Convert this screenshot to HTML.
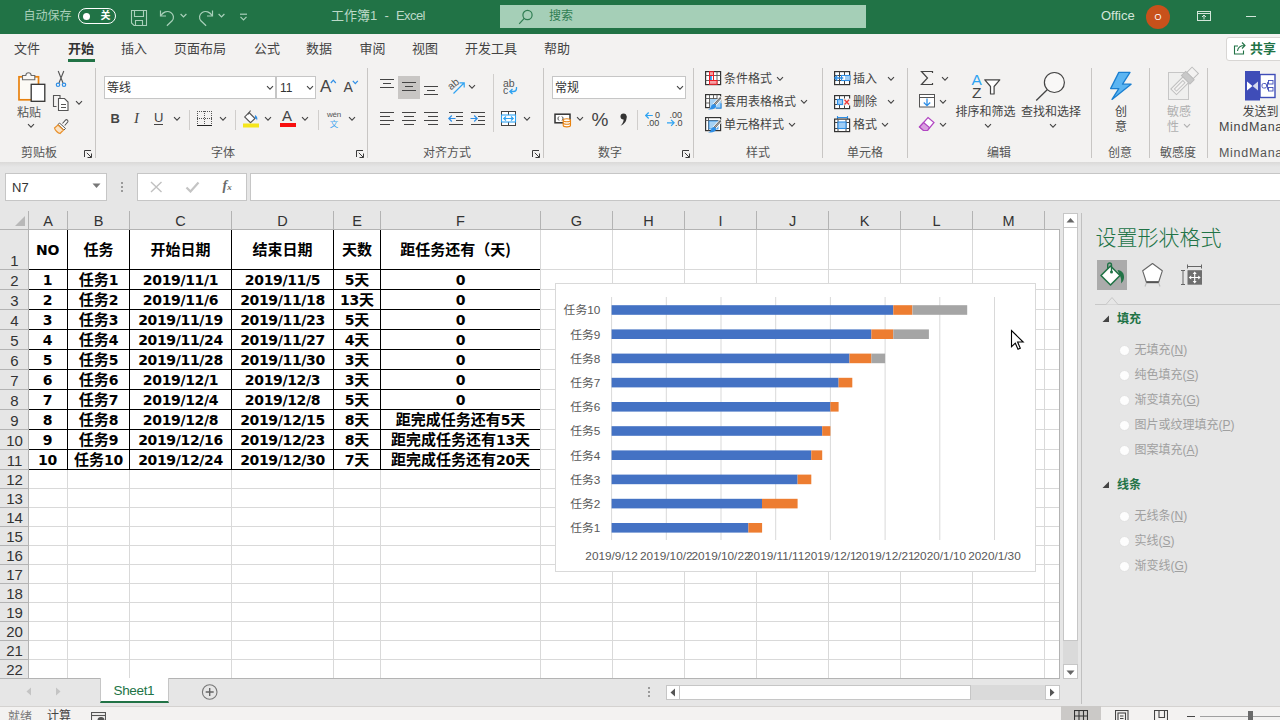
<!DOCTYPE html>
<html lang="zh-CN">
<head>
<meta charset="utf-8">
<title>工作簿1 - Excel</title>
<style>
html,body{margin:0;padding:0;}
body{width:1280px;height:720px;overflow:hidden;background:#e6e6e6;font-family:"Liberation Sans","Noto Sans CJK SC",sans-serif;font-size:12px;color:#444;}
#app{position:relative;width:1280px;height:720px;overflow:hidden;}
#app div,#app span,#app svg{position:absolute;box-sizing:border-box;}
.t{white-space:nowrap;line-height:1;}
/* title bar */
#titlebar{left:0;top:0;width:1280px;height:34px;background:#217346;}
#tabs{left:0;top:34px;width:1280px;height:28px;background:#f3f2f1;}
#ribbon{left:0;top:62px;width:1280px;height:100px;background:#f3f2f1;}
#ribshadow{left:0;top:162px;width:1280px;height:5px;background:linear-gradient(#dad9d8,#e6e6e6);}
.tab{top:41.6px;font-size:13px;color:#444;white-space:nowrap;line-height:14px;}
.gl{top:145px;font-size:12px;color:#555;white-space:nowrap;line-height:13px;text-align:center;}
.gsep{top:70px;width:1px;height:86px;background:#c8c6c4;}
.rt{font-size:12px;color:#444;white-space:nowrap;line-height:13px;}
/* sheet */
#sheet{left:0;top:0;width:1280px;height:720px;}
#gridbg{left:28px;top:230px;width:1031px;height:449px;background:#fff;}
.ch{top:212px;height:17px;text-align:center;font-size:14.5px;line-height:19px;color:#333;}
.chs{top:211px;width:1px;height:19px;background:#b3b3b3;}
.rh{left:0;width:28px;}
.rh span{left:2.5px;width:24px;bottom:-1px;text-align:center;font-size:15px;line-height:18px;color:#333;display:block;}
.rhs{left:0;width:28px;height:1px;background:#b3b3b3;}
.gv{top:230px;width:1px;height:449px;background:#d9d9d9;}
.gh{left:29px;width:1030px;height:1px;background:#d9d9d9;}
.tc{border:1px solid #000;background:#fff;text-align:center;font-weight:bold;color:#000;font-size:15px;}
.tc span{left:0;right:0;top:50%;line-height:20px;margin-top:-11px;white-space:nowrap;display:block;font-family:"Noto Sans CJK SC",sans-serif;}
.tc b{position:static;font-family:"DejaVu Sans",sans-serif;font-size:14px;letter-spacing:-0.35px;font-weight:bold;}
.tc.hd{border-top:0;}
.tc.c0{border-left:0;}
.tc.c5{border-right:0;}
#rhline{left:28px;top:211px;width:1px;height:468px;background:#b3b3b3;}
#chline{left:0;top:229px;width:1059px;height:1px;background:#b3b3b3;}
.chart{overflow:visible;}
.cl{font-size:11.8px;fill:#595959;font-family:"Liberation Sans","Noto Sans CJK SC",sans-serif;}
.rad{width:11px;height:11px;border-radius:50%;background:#fdfdfd;border:1px solid #e2e2e2;}
.ro{font-size:12px;line-height:14px;color:#a0a0a0;}
.tc i{position:relative;left:-5px;font-style:normal;}
.tc.hd span{margin-top:-10.3px;}

</style>
</head>
<body>
<div id="app">
<div id="titlebar">
<span class="t" style="left:23.500px;top:10px;font-size:12px;color:#a9d0ba">自动保存</span>
<div style="left:78px;top:8px;width:38px;height:16px;border:1px solid #fff;border-radius:8px"></div>
<div style="left:82.5px;top:12.5px;width:7px;height:7px;border-radius:50%;background:#fff"></div>
<span class="t" style="left:100.5px;top:11px;font-size:10px;color:#fff;font-weight:bold">关</span>
<svg style="left:130px;top:9px" width="18" height="18" viewBox="0 0 18 18" fill="none" stroke="#a9d0ba" stroke-width="1.1"><path d="M1.5 1.5h15v15h-12.5l-2.5-2.5z"/><path d="M4.5 1.5v6h9v-6"/><path d="M5.500 16.500v-5h7v5"/></svg>
<svg style="left:158px;top:8px" width="20" height="19" viewBox="0 0 20 19" fill="none" stroke="#a9d0ba" stroke-width="1.2"><path d="M2.500 2.500v5.500h5.500"/><path d="M2.800 7.800c2-3.600 6.500-5.600 10-3.300c3 2 3.500 5.600 1.300 8.300l-5.200 5"/></svg>
<svg style="left:180px;top:13px" width="7" height="6" viewBox="0 0 7 6" fill="none" stroke="#a9d0ba" stroke-width="1.2"><path d="M0.600 1l2.900 3l2.900-3"/></svg>
<svg style="left:196px;top:8px" width="20" height="19" viewBox="0 0 20 19" fill="none" stroke="#a9d0ba" stroke-width="1.2"><path d="M16.500 2.500v5.500h-5.500"/><path d="M16.200 7.800c-2-3.600-6.500-5.600-10-3.300c-3 2-3.500 5.600-1.300 8.300l5.200 5"/></svg>
<svg style="left:218px;top:13px" width="7" height="6" viewBox="0 0 7 6" fill="none" stroke="#a9d0ba" stroke-width="1.2"><path d="M0.600 1l2.900 3l2.900-3"/></svg>
<svg style="left:239px;top:13px" width="9" height="8" viewBox="0 0 9 8" fill="none" stroke="#a9d0ba" stroke-width="1.2"><path d="M1 1.200h7"/><path d="M1.500 3.800l3 3l3-3"/></svg>
<span class="t" style="left:331px;top:8px;font-size:13px;line-height:15px;color:#bcd9c8;white-space:pre">工作簿1  -  <span style="position:static;letter-spacing:-0.600px">Excel</span></span>
<div style="left:500px;top:5px;width:366px;height:23px;background:#a5cfb7"></div>
<svg style="left:518px;top:9px" width="16" height="16" viewBox="0 0 16 16" fill="none" stroke="#2f7d52" stroke-width="1.2"><circle cx="9.500" cy="6" r="4.600"/><path d="M6.200 9.300l-5 5.500"/></svg>
<span class="t" style="left:549px;top:10px;font-size:12px;color:#2f7d52">搜索</span>
<span class="t" style="left:1101px;top:8px;font-size:13px;line-height:15px;color:#d3e6da">Office</span>
<div style="left:1146px;top:5px;width:24px;height:24px;border-radius:50%;background:#c8511b"></div>
<span class="t" style="left:1154.500px;top:12.500px;font-size:9px;color:#fff">O</span>
<svg style="left:1197px;top:10px" width="15" height="12" viewBox="0 0 15 12" fill="none" stroke="#d3e6da" stroke-width="1"><rect x="0.500" y="1.500" width="13" height="9"/><path d="M0.500 3.500h13"/><path d="M7 9.500v-4.500M5 7l2-2l2 2"/></svg>
<div style="left:1246px;top:16px;width:10px;height:1px;background:#d3e6da"></div>
</div>
<div id="tabs"></div>
<span class="tab" style="left:14px">文件</span>
<span class="tab" style="left:68px;font-weight:bold;color:#333">开始</span>
<div style="left:68px;top:59px;width:27px;height:3px;background:#217346"></div>
<span class="tab" style="left:121px">插入</span>
<span class="tab" style="left:174px">页面布局</span>
<span class="tab" style="left:254px">公式</span>
<span class="tab" style="left:306px">数据</span>
<span class="tab" style="left:359.500px">审阅</span>
<span class="tab" style="left:412px">视图</span>
<span class="tab" style="left:465px">开发工具</span>
<span class="tab" style="left:544px">帮助</span>
<div style="left:1226px;top:37px;width:60px;height:24px;background:#fff;border:1px solid #d8d6d4;border-radius:3px"></div>
<svg style="left:1233px;top:41px" width="14" height="14" viewBox="0 0 14 14" fill="none" stroke="#217346" stroke-width="1.1"><path d="M5 5h-3.500v8h9v-3.500"/><path d="M4.500 10c0.500-3.500 3-5.500 7-5.500M9 1.500l3 3l-3 3"/></svg>
<span class="tab" style="left:1250px;font-weight:bold;color:#217346">共享</span>

<div id="ribbon"></div>
<div id="ribshadow"></div>
<svg style="left:17.0px;top:70.0px" width="30" height="33" viewBox="0 0 30 33" ><rect x="2" y="6.800" width="19.500" height="23" fill="#fcfaf5" stroke="#e8820f" stroke-width="1.700"/><path d="M5.500 9.700v-4.200h3.300c0.300-3.600 5.100-3.600 5.400 0h3.600v4.200z" fill="#f8f7f5" stroke="#6a6a6a" stroke-width="1.100"/><rect x="14.200" y="14.300" width="13.600" height="17" fill="#fff" stroke="#333" stroke-width="1.300"/></svg>
<span class="t" style="left:17.0px;top:105.5px;font-size:12px;line-height:14px;color:#555;">粘贴</span>
<svg style="left:27.0px;top:123.3px" width="8" height="6" viewBox="0 0 8 6" fill="none" stroke="#444" stroke-width="1.1"><path d="M1 1.200l3 3l3-3"/></svg>
<svg style="left:54.0px;top:70.0px" width="14" height="18" viewBox="0 0 14 18" ><path d="M4.200 1l4.800 12M9.800 1l-4.800 12" stroke="#555" stroke-width="1.1" fill="none"/><circle cx="4" cy="14.800" r="1.700" fill="none" stroke="#2f8fe6" stroke-width="1.2"/><circle cx="10" cy="14.800" r="1.700" fill="none" stroke="#2f8fe6" stroke-width="1.2"/></svg>
<svg style="left:52.0px;top:94.0px" width="18" height="17" viewBox="0 0 18 17" ><path d="M4.500 12.500h-3v-11h6.500v2.500" fill="none" stroke="#555" stroke-width="1.1"/><path d="M6.500 4.500h6l3.500 3.500v8.500h-9.500z" fill="#fff" stroke="#555" stroke-width="1.1"/><path d="M9 10.500h5M9 13.500h5" stroke="#555" stroke-width="1"/></svg>
<svg style="left:75.0px;top:100.3px" width="8" height="6" viewBox="0 0 8 6" fill="none" stroke="#444" stroke-width="1.1"><path d="M1 1.200l3 3l3-3"/></svg>
<svg style="left:53.0px;top:118.0px" width="18" height="17" viewBox="0 0 18 17" ><path d="M9.500 5.500l3.200-3.500c1-1 3 0.500 2 2l-3 3.500" fill="#fff" stroke="#555" stroke-width="1.1"/><path d="M6.500 5l6 5.500l-1.500 1.500l-6-5.500z" fill="#fff" stroke="#555" stroke-width="1"/><path d="M5 7l5.500 5l-3.500 3.500c-2-0.500-5-3-5.500-5.500z" fill="#fbe3c5" stroke="#e8912d" stroke-width="1.2"/></svg>
<span class="t" style="left:-61.0px;top:146.0px;width:200px;text-align:center;font-size:12px;line-height:14px;color:#555;">剪贴板</span>
<svg style="left:84.0px;top:150.0px" width="8" height="8" viewBox="0 0 8 8" fill="none" stroke="#3a3a3a" stroke-width="1"><path d="M0.500 7v-6.500h6.500" /><path d="M2.800 2.800l4.500 4.500M7.500 3.500v4h-4"/></svg>
<div style="left:95.0px;top:68.0px;width:1px;height:90.0px;background:#c8c6c4"></div>
<div style="left:104px;top:76px;width:172px;height:23px;background:#fff;border:1px solid #c6c6c6"></div>
<span class="t" style="left:107.0px;top:81.0px;font-size:12px;line-height:14px;color:#333;">等线</span>
<svg style="left:265.5px;top:85.3px" width="8" height="6" viewBox="0 0 8 6" fill="none" stroke="#444" stroke-width="1.1"><path d="M1 1.200l3 3l3-3"/></svg>
<div style="left:275.500px;top:76px;width:40px;height:23px;background:#fff;border:1px solid #c6c6c6"></div>
<span class="t" style="left:280.0px;top:81.0px;font-size:12px;line-height:14px;color:#333;">11</span>
<svg style="left:305.5px;top:85.3px" width="8" height="6" viewBox="0 0 8 6" fill="none" stroke="#444" stroke-width="1.1"><path d="M1 1.200l3 3l3-3"/></svg>
<span class="t" style="left:320.0px;top:77.0px;font-size:17px;line-height:19px;color:#444;">A</span>
<svg style="left:330.0px;top:79.0px" width="7" height="5" viewBox="0 0 7 5" ><path d="M0.800 4l2.500-2.800l2.500 2.800" fill="none" stroke="#2f8fe6" stroke-width="1.2"/></svg>
<span class="t" style="left:343.5px;top:79.0px;font-size:14px;line-height:16px;color:#444;">A</span>
<svg style="left:351.5px;top:79.5px" width="7" height="5" viewBox="0 0 7 5" ><path d="M0.800 0.800l2.500 2.800l2.500-2.800" fill="none" stroke="#2f8fe6" stroke-width="1.2"/></svg>
<span class="t" style="left:110.5px;top:111.0px;font-size:13px;line-height:15px;color:#444;font-weight:bold">B</span>
<span class="t" style="left:134.0px;top:110.0px;font-size:15px;line-height:17px;color:#444;font-style:italic;font-family:'Liberation Serif',serif">I</span>
<span class="t" style="left:154.0px;top:111.0px;font-size:13px;line-height:15px;color:#444;border-bottom:1px solid #444;line-height:13px">U</span>
<svg style="left:173.0px;top:116.3px" width="8" height="6" viewBox="0 0 8 6" fill="none" stroke="#444" stroke-width="1.1"><path d="M1 1.200l3 3l3-3"/></svg>
<div style="left:189.0px;top:110.0px;width:1px;height:20.0px;background:#d0cecc"></div>
<svg style="left:197.0px;top:111.0px" width="16" height="16" viewBox="0 0 16 16" ><g shape-rendering="crispEdges" stroke="#555" stroke-width="1" stroke-dasharray="1 1" fill="none"><path d="M0 0.500h15M0 7.500h15M0.500 0v14M7.500 0v14M14.500 0v14"/></g><path d="M0 14.500h15" stroke="#222" stroke-width="1.400" shape-rendering="crispEdges"/></svg>
<svg style="left:219.0px;top:116.3px" width="8" height="6" viewBox="0 0 8 6" fill="none" stroke="#444" stroke-width="1.1"><path d="M1 1.200l3 3l3-3"/></svg>
<div style="left:235.0px;top:110.0px;width:1px;height:20.0px;background:#d0cecc"></div>
<svg style="left:243.0px;top:108.5px" width="17" height="19" viewBox="0 0 17 19" ><path d="M6 3.500l6 6l-4.500 4.200l-5.800-5.800z" fill="#fff" stroke="#555" stroke-width="1.100"/><path d="M5 5.500l2.500-4" stroke="#555" stroke-width="1.100" fill="none"/><path d="M12 6c2 1 3 3 2 5.500c-0.500-1.500-1.200-2-2.200-2.200z" fill="#2f8fe6"/><rect x="0" y="14.500" width="16" height="4" fill="#f5e51b"/></svg>
<svg style="left:264.0px;top:116.3px" width="8" height="6" viewBox="0 0 8 6" fill="none" stroke="#444" stroke-width="1.1"><path d="M1 1.200l3 3l3-3"/></svg>
<span class="t" style="left:282.0px;top:107.0px;font-size:15px;line-height:17px;color:#444;">A</span>
<div style="left:280px;top:123px;width:16px;height:4px;background:#f80f0f"></div>
<svg style="left:301.0px;top:116.3px" width="8" height="6" viewBox="0 0 8 6" fill="none" stroke="#444" stroke-width="1.1"><path d="M1 1.200l3 3l3-3"/></svg>
<div style="left:318.0px;top:110.0px;width:1px;height:20.0px;background:#d0cecc"></div>
<span class="t" style="left:327.0px;top:110.0px;font-size:8px;line-height:10px;color:#555;letter-spacing:-0.3px">wén</span>
<span class="t" style="left:329.7px;top:118.5px;font-size:8.5px;line-height:10.5px;color:#41a5ee;">文</span>
<svg style="left:347.5px;top:116.3px" width="8" height="6" viewBox="0 0 8 6" fill="none" stroke="#444" stroke-width="1.1"><path d="M1 1.200l3 3l3-3"/></svg>
<span class="t" style="left:123.0px;top:146.0px;width:200px;text-align:center;font-size:12px;line-height:14px;color:#555;">字体</span>
<svg style="left:356.0px;top:150.0px" width="8" height="8" viewBox="0 0 8 8" fill="none" stroke="#3a3a3a" stroke-width="1"><path d="M0.500 7v-6.500h6.500" /><path d="M2.800 2.800l4.500 4.500M7.500 3.500v4h-4"/></svg>
<div style="left:367.0px;top:68.0px;width:1px;height:90.0px;background:#c8c6c4"></div>
<div style="left:380.0px;top:79.0px;width:14.0px;height:1px;background:#444"></div>
<div style="left:383.0px;top:83.0px;width:8.0px;height:1px;background:#444"></div>
<div style="left:380.0px;top:87.0px;width:14.0px;height:1px;background:#444"></div>
<div style="left:398px;top:76px;width:22px;height:23px;background:#c8c6c4"></div>
<div style="left:402.0px;top:82.0px;width:14.0px;height:1px;background:#444"></div>
<div style="left:405.0px;top:86.0px;width:8.0px;height:1px;background:#444"></div>
<div style="left:402.0px;top:90.0px;width:14.0px;height:1px;background:#444"></div>
<div style="left:424.0px;top:86.0px;width:14.0px;height:1px;background:#444"></div>
<div style="left:427.0px;top:90.0px;width:8.0px;height:1px;background:#444"></div>
<div style="left:424.0px;top:94.0px;width:14.0px;height:1px;background:#444"></div>
<svg style="left:446.0px;top:76.0px" width="21" height="21" viewBox="0 0 21 21" ><text x="2" y="12" font-size="10.500" fill="#555" transform="rotate(-40 7 9)" font-family="Liberation Sans,sans-serif">ab</text><path d="M7.500 17.500l10.500-10.500M13.500 6.800h4.700v4.700" fill="none" stroke="#2ea3f2" stroke-width="1.200"/></svg>
<svg style="left:467.5px;top:84.3px" width="8" height="6" viewBox="0 0 8 6" fill="none" stroke="#444" stroke-width="1.1"><path d="M1 1.200l3 3l3-3"/></svg>
<div style="left:493.0px;top:74.0px;width:1px;height:58.0px;background:#d0cecc"></div>
<svg style="left:502.0px;top:78.0px" width="17" height="18" viewBox="0 0 17 18" ><text x="1" y="9" font-size="10.500" fill="#555" font-family="Liberation Sans,sans-serif">ab</text><text x="1" y="16.300" font-size="10.500" fill="#555" font-family="Liberation Sans,sans-serif">c</text><path d="M14.500 9v1.500c0 2-1 3-3 3h-3.500M10.500 11l-2.700 2.500l2.700 2.500" fill="none" stroke="#2ea3f2" stroke-width="1.300"/></svg>
<div style="left:380.0px;top:112.0px;width:14.0px;height:1px;background:#444"></div>
<div style="left:380.0px;top:116.0px;width:10.0px;height:1px;background:#444"></div>
<div style="left:380.0px;top:120.0px;width:14.0px;height:1px;background:#444"></div>
<div style="left:380.0px;top:124.0px;width:10.0px;height:1px;background:#444"></div>
<div style="left:402.0px;top:112.0px;width:14.0px;height:1px;background:#444"></div>
<div style="left:404.0px;top:116.0px;width:10.0px;height:1px;background:#444"></div>
<div style="left:402.0px;top:120.0px;width:14.0px;height:1px;background:#444"></div>
<div style="left:404.0px;top:124.0px;width:10.0px;height:1px;background:#444"></div>
<div style="left:424.0px;top:112.0px;width:14.0px;height:1px;background:#444"></div>
<div style="left:428.0px;top:116.0px;width:10.0px;height:1px;background:#444"></div>
<div style="left:424.0px;top:120.0px;width:14.0px;height:1px;background:#444"></div>
<div style="left:428.0px;top:124.0px;width:10.0px;height:1px;background:#444"></div>
<div style="left:449.0px;top:112.0px;width:14.0px;height:1px;background:#444"></div>
<div style="left:449.0px;top:124.0px;width:14.0px;height:1px;background:#444"></div>
<div style="left:456.0px;top:116.0px;width:7.0px;height:1px;background:#444"></div>
<div style="left:456.0px;top:120.0px;width:7.0px;height:1px;background:#444"></div>
<svg style="left:448.0px;top:114.0px" width="8" height="9" viewBox="0 0 8 9" ><path d="M7.500 4.500h-6.500M3.800 1.500l-3 3l3 3" fill="none" stroke="#2f8fe6" stroke-width="1.2"/></svg>
<div style="left:471.0px;top:112.0px;width:14.0px;height:1px;background:#444"></div>
<div style="left:471.0px;top:124.0px;width:14.0px;height:1px;background:#444"></div>
<div style="left:478.0px;top:116.0px;width:7.0px;height:1px;background:#444"></div>
<div style="left:478.0px;top:120.0px;width:7.0px;height:1px;background:#444"></div>
<svg style="left:470.0px;top:114.0px" width="8" height="9" viewBox="0 0 8 9" ><path d="M0.500 4.500h6.500M4.200 1.500l3 3l-3 3" fill="none" stroke="#2f8fe6" stroke-width="1.2"/></svg>
<svg style="left:501.0px;top:111.0px" width="16" height="16" viewBox="0 0 16 16" ><rect x="0.500" y="0.500" width="14" height="14" fill="#fff" stroke="#444"/><path d="M7.500 0.500v3.500M7.500 11v3.500" stroke="#444" fill="none"/><rect x="0.500" y="4" width="14" height="7" fill="#fff" stroke="#2ea3f2" stroke-width="1.100"/><path d="M3 7.500h9M5 5.500l-2.200 2l2.200 2M10 5.500l2.200 2l-2.200 2" fill="none" stroke="#2ea3f2" stroke-width="1.200"/></svg>
<svg style="left:522.5px;top:116.3px" width="8" height="6" viewBox="0 0 8 6" fill="none" stroke="#444" stroke-width="1.1"><path d="M1 1.200l3 3l3-3"/></svg>
<span class="t" style="left:347.0px;top:146.0px;width:200px;text-align:center;font-size:12px;line-height:14px;color:#555;">对齐方式</span>
<svg style="left:532.0px;top:150.0px" width="8" height="8" viewBox="0 0 8 8" fill="none" stroke="#3a3a3a" stroke-width="1"><path d="M0.500 7v-6.500h6.500" /><path d="M2.800 2.800l4.500 4.500M7.500 3.500v4h-4"/></svg>
<div style="left:543.0px;top:68.0px;width:1px;height:90.0px;background:#c8c6c4"></div>
<div style="left:552px;top:76px;width:134px;height:23px;background:#fff;border:1px solid #c6c6c6"></div>
<span class="t" style="left:555.0px;top:81.0px;font-size:12px;line-height:14px;color:#333;">常规</span>
<svg style="left:676.0px;top:85.3px" width="8" height="6" viewBox="0 0 8 6" fill="none" stroke="#444" stroke-width="1.1"><path d="M1 1.200l3 3l3-3"/></svg>
<svg style="left:554.0px;top:113.0px" width="19" height="15" viewBox="0 0 19 15" ><rect x="1" y="1.200" width="15" height="8.600" fill="#fff" stroke="#333" stroke-width="1.500"/><path d="M5 3.500c-1.300 1-1.300 3 0 4M8 3.500c1.300 1 1.300 3 0 4" stroke="#333" fill="none" stroke-width="1"/><path d="M9.200 7.200v5c0 2.200 7.300 2.200 7.300 0v-5" fill="#fff" stroke="#e8820f" stroke-width="1.100"/><ellipse cx="12.850" cy="7.200" rx="3.650" ry="1.500" fill="#fff" stroke="#e8820f" stroke-width="1.100"/><path d="M9.200 9.700c0 2 7.300 2 7.300 0" fill="none" stroke="#e8820f" stroke-width="1.100"/></svg>
<svg style="left:576.0px;top:116.3px" width="8" height="6" viewBox="0 0 8 6" fill="none" stroke="#444" stroke-width="1.1"><path d="M1 1.200l3 3l3-3"/></svg>
<span class="t" style="left:591.5px;top:109.0px;font-size:19px;line-height:21px;color:#444;">%</span>
<svg style="left:618.5px;top:112.5px" width="9" height="14" viewBox="0 0 9 14" ><circle cx="4.500" cy="3.600" r="3" fill="#333"/><path d="M7.400 2.800c1 4.800-1.800 8.300-5.800 10c2.400-2.400 3.100-4.300 3-7z" fill="#333"/></svg>
<div style="left:637.0px;top:110.0px;width:1px;height:20.0px;background:#d0cecc"></div>
<svg style="left:645.0px;top:110.0px" width="17" height="17" viewBox="0 0 17 17" ><path d="M0.800 5.500h7M3.700 2.500l-3 3l3 3" fill="none" stroke="#2ea3f2" stroke-width="1.200"/><text x="10" y="8.400" font-size="9" fill="#444" font-family="Liberation Sans,sans-serif">0</text><text x="1.700" y="16.200" font-size="9" fill="#444" font-family="Liberation Sans,sans-serif">.00</text></svg>
<svg style="left:667.0px;top:110.0px" width="17" height="17" viewBox="0 0 17 17" ><text x="2.500" y="8.400" font-size="9" fill="#444" font-family="Liberation Sans,sans-serif">.00</text><path d="M0 12.800h7M4.100 9.800l3 3l-3 3" fill="none" stroke="#2ea3f2" stroke-width="1.200"/><text x="8" y="16.200" font-size="9" fill="#444" font-family="Liberation Sans,sans-serif">.0</text></svg>
<span class="t" style="left:510.0px;top:146.0px;width:200px;text-align:center;font-size:12px;line-height:14px;color:#555;">数字</span>
<svg style="left:682.0px;top:150.0px" width="8" height="8" viewBox="0 0 8 8" fill="none" stroke="#3a3a3a" stroke-width="1"><path d="M0.500 7v-6.500h6.500" /><path d="M2.800 2.800l4.500 4.500M7.500 3.500v4h-4"/></svg>
<div style="left:693.0px;top:68.0px;width:1px;height:90.0px;background:#c8c6c4"></div>
<svg style="left:705.0px;top:71.0px" width="17" height="15" viewBox="0 0 17 15" ><rect x="0.600" y="0.600" width="15" height="13" fill="#fff" stroke="#333" stroke-width="1.200"/><path d="M0.500 4.500h15M0.500 9.500h15M4.500 0.500v13M8.500 0.500v13M12 0.500v13" stroke="#555" stroke-width="0.900" fill="none"/><rect x="4.500" y="0.700" width="4" height="3.800" fill="#f7a1a5" stroke="#ee1c24" stroke-width="1"/><rect x="4.500" y="4.500" width="4" height="5" fill="#fff" stroke="#ee1c24" stroke-width="1"/><rect x="5" y="5" width="1.800" height="4" fill="#2f8fe6"/><rect x="4.500" y="9.500" width="7.500" height="3.800" fill="#f7a1a5" stroke="#ee1c24" stroke-width="1"/></svg>
<span class="t" style="left:724.0px;top:72.0px;font-size:12px;line-height:14px;color:#444;">条件格式</span>
<svg style="left:776.0px;top:76.3px" width="8" height="6" viewBox="0 0 8 6" fill="none" stroke="#444" stroke-width="1.1"><path d="M1 1.200l3 3l3-3"/></svg>
<svg style="left:705.0px;top:94.0px" width="18" height="17" viewBox="0 0 18 17" ><rect x="0.600" y="0.600" width="15" height="13" fill="#fff" stroke="#333" stroke-width="1.200"/><path d="M0.500 4.500h15M0.500 9h15M4.500 0.500v13M8.500 0.500v13M12 0.500v13" stroke="#555" stroke-width="0.900" fill="none"/><rect x="5" y="5" width="11" height="9" fill="#a6d2f5"/><path d="M11 14.200h5v-5" fill="none" stroke="#2f8fe6" stroke-width="1.200"/><path d="M15.300 4.200l-6.300 7" stroke="#fff" stroke-width="3.600" stroke-linecap="round" fill="none"/><path d="M15.300 4.200l-6.300 7" stroke="#555" stroke-width="2" stroke-linecap="round" fill="none"/><path d="M15 4.500l-5.500 6" stroke="#ddd" stroke-width="0.700" fill="none"/><path d="M9.800 10.200c1.200 0.800 1.600 1.800 1 3c-1.500 2-4.500 2.300-7.800 2.300c2.500-1 2.800-2 3.300-3.500c0.500-1.500 2-2.300 3.500-1.800z" fill="#2f8fe6"/></svg>
<span class="t" style="left:724.0px;top:95.0px;font-size:12px;line-height:14px;color:#444;">套用表格格式</span>
<svg style="left:800.0px;top:99.3px" width="8" height="6" viewBox="0 0 8 6" fill="none" stroke="#444" stroke-width="1.1"><path d="M1 1.200l3 3l3-3"/></svg>
<svg style="left:705.0px;top:117.0px" width="18" height="17" viewBox="0 0 18 17" ><rect x="0.600" y="0.600" width="15" height="13" fill="#fff" stroke="#333" stroke-width="1.200"/><path d="M0.500 3.500h15M3.500 0.500v13" stroke="#555" stroke-width="0.900" fill="none"/><rect x="4" y="4" width="9" height="8" fill="#a6d2f5" stroke="#2f8fe6" stroke-width="0.800"/><path d="M15.300 4.200l-6.300 7" stroke="#fff" stroke-width="3.600" stroke-linecap="round" fill="none"/><path d="M15.300 4.200l-6.300 7" stroke="#555" stroke-width="2" stroke-linecap="round" fill="none"/><path d="M15 4.500l-5.500 6" stroke="#ddd" stroke-width="0.700" fill="none"/><path d="M9.800 10.200c1.200 0.800 1.600 1.800 1 3c-1.500 2-4.500 2.300-7.800 2.300c2.500-1 2.800-2 3.300-3.500c0.500-1.500 2-2.300 3.500-1.800z" fill="#2f8fe6"/></svg>
<span class="t" style="left:724.0px;top:118.0px;font-size:12px;line-height:14px;color:#444;">单元格样式</span>
<svg style="left:788.0px;top:122.3px" width="8" height="6" viewBox="0 0 8 6" fill="none" stroke="#444" stroke-width="1.1"><path d="M1 1.200l3 3l3-3"/></svg>
<span class="t" style="left:658.0px;top:146.0px;width:200px;text-align:center;font-size:12px;line-height:14px;color:#555;">样式</span>
<div style="left:822.0px;top:68.0px;width:1px;height:90.0px;background:#c8c6c4"></div>
<svg style="left:834.0px;top:71.0px" width="17" height="15" viewBox="0 0 17 15" ><rect x="0.600" y="0.600" width="15" height="13" fill="#fff" stroke="#333" stroke-width="1.200"/><path d="M0.500 4.500h15M0.500 9.500h15M5.500 0.500v13M10.500 0.500v13" stroke="#444" fill="none"/><rect x="7.500" y="4.500" width="8.500" height="5" fill="#fff" stroke="#2f8fe6" stroke-width="1.100"/><rect x="11" y="5" width="4" height="4" fill="#9fcdf5"/><path d="M0.800 7h8.500M3.500 4.300l-2.700 2.700l2.700 2.700" fill="none" stroke="#2f8fe6" stroke-width="1.300"/></svg>
<span class="t" style="left:853.0px;top:72.0px;font-size:12px;line-height:14px;color:#444;">插入</span>
<svg style="left:887.0px;top:76.3px" width="8" height="6" viewBox="0 0 8 6" fill="none" stroke="#444" stroke-width="1.1"><path d="M1 1.200l3 3l3-3"/></svg>
<svg style="left:834.0px;top:94.5px" width="17" height="15" viewBox="0 0 17 15" ><rect x="0.600" y="0.600" width="15" height="13" fill="#fff" stroke="#333" stroke-width="1.200"/><path d="M0.500 4.500h15M0.500 9.500h15M5.500 0.500v13M10.500 0.500v13" stroke="#444" fill="none"/><rect x="9" y="3.500" width="8" height="7" fill="#f3f2f1"/><rect x="3.500" y="4.500" width="5" height="5" fill="#9fcdf5" stroke="#2f8fe6" stroke-width="1.200"/><path d="M10.500 4.700l4.600 4.800M15.100 4.700l-4.600 4.800" stroke="#ee3a3a" stroke-width="1.300" fill="none"/></svg>
<span class="t" style="left:853.0px;top:95.0px;font-size:12px;line-height:14px;color:#444;">删除</span>
<svg style="left:887.0px;top:99.3px" width="8" height="6" viewBox="0 0 8 6" fill="none" stroke="#444" stroke-width="1.1"><path d="M1 1.200l3 3l3-3"/></svg>
<svg style="left:834.0px;top:116.0px" width="17" height="17" viewBox="0 0 17 17" ><path d="M3.500 0v3M13.500 0v3M3.500 1.500h10" stroke="#2f8fe6" stroke-width="1.100" fill="none"/><rect x="0.600" y="3.100" width="15" height="12.500" fill="#fff" stroke="#333" stroke-width="1.200"/><path d="M0.500 6.500h15M0.500 12.500h15M4 3.500v12M12 3.500v12" stroke="#444" fill="none"/><rect x="4" y="6" width="8" height="6.500" fill="#9fcdf5" stroke="#2f8fe6" stroke-width="1.100"/></svg>
<span class="t" style="left:853.0px;top:118.0px;font-size:12px;line-height:14px;color:#444;">格式</span>
<svg style="left:881.0px;top:122.3px" width="8" height="6" viewBox="0 0 8 6" fill="none" stroke="#444" stroke-width="1.1"><path d="M1 1.200l3 3l3-3"/></svg>
<span class="t" style="left:765.0px;top:146.0px;width:200px;text-align:center;font-size:12px;line-height:14px;color:#555;">单元格</span>
<div style="left:907.0px;top:68.0px;width:1px;height:90.0px;background:#c8c6c4"></div>
<svg style="left:920.0px;top:70.0px" width="14" height="16" viewBox="0 0 14 16" ><path d="M12.500 3v-1.500h-11l6 6.500l-6 6.500h11v-1.500" fill="none" stroke="#444" stroke-width="1.2"/></svg>
<svg style="left:941.0px;top:76.3px" width="8" height="6" viewBox="0 0 8 6" fill="none" stroke="#444" stroke-width="1.1"><path d="M1 1.200l3 3l3-3"/></svg>
<svg style="left:919.0px;top:94.0px" width="17" height="14" viewBox="0 0 17 14" ><rect x="0.500" y="0.500" width="15" height="12.500" fill="#fff" stroke="#555"/><path d="M0.500 3.500h15" stroke="#555"/><path d="M8 4.500v7M4.800 8.500l3.200 3.200l3.200-3.200" fill="none" stroke="#2f8fe6" stroke-width="1.300"/></svg>
<svg style="left:939.0px;top:99.3px" width="8" height="6" viewBox="0 0 8 6" fill="none" stroke="#444" stroke-width="1.1"><path d="M1 1.200l3 3l3-3"/></svg>
<svg style="left:918.0px;top:116.0px" width="18" height="16" viewBox="0 0 18 16" ><path d="M10 1.500l6 5l-6.500 8h-4l-4-3.500z" fill="#fff" stroke="#b146c2" stroke-width="1.2"/><path d="M5.500 6.500l6 5l-2 3h-4l-4-3.500z" fill="#d9a0e0" stroke="#b146c2" stroke-width="1.2"/></svg>
<svg style="left:939.0px;top:122.3px" width="8" height="6" viewBox="0 0 8 6" fill="none" stroke="#444" stroke-width="1.1"><path d="M1 1.200l3 3l3-3"/></svg>
<span class="t" style="left:971.5px;top:70.5px;font-size:15.5px;line-height:17.5px;color:#2ea3f2;">A</span>
<span class="t" style="left:972.0px;top:84.0px;font-size:15.5px;line-height:17.5px;color:#444;">Z</span>
<svg style="left:984.0px;top:79.0px" width="17" height="17" viewBox="0 0 17 17" ><path d="M0.800 0.800h15l-5.700 6.700v7.500h-3.600v-7.500z" fill="#fff" stroke="#444" stroke-width="1.2" stroke-linejoin="round"/></svg>
<span class="t" style="left:885.5px;top:105.0px;width:200px;text-align:center;font-size:12px;line-height:14px;color:#444;">排序和筛选</span>
<svg style="left:983.5px;top:123.3px" width="8" height="6" viewBox="0 0 8 6" fill="none" stroke="#444" stroke-width="1.1"><path d="M1 1.200l3 3l3-3"/></svg>
<svg style="left:1034.0px;top:71.0px" width="34" height="31" viewBox="0 0 34 31" ><circle cx="20.400" cy="11.500" r="10" fill="#f9f8f7" stroke="#444" stroke-width="1.200"/><path d="M13.200 18.800l-11 10.700" stroke="#444" stroke-width="1.300"/></svg>
<span class="t" style="left:951.0px;top:105.0px;width:200px;text-align:center;font-size:12px;line-height:14px;color:#444;">查找和选择</span>
<svg style="left:1048.5px;top:123.3px" width="8" height="6" viewBox="0 0 8 6" fill="none" stroke="#444" stroke-width="1.1"><path d="M1 1.200l3 3l3-3"/></svg>
<span class="t" style="left:899.0px;top:146.0px;width:200px;text-align:center;font-size:12px;line-height:14px;color:#555;">编辑</span>
<div style="left:1091.0px;top:68.0px;width:1px;height:90.0px;background:#c8c6c4"></div>
<svg style="left:1109.0px;top:71.0px" width="25" height="30" viewBox="0 0 25 30" ><path d="M9.800 1.400h11.200l-7.500 11.800h8.600l-19.100 15.200l6.800-10.800h-8.200z" fill="#5bb5f2" stroke="#1a7fd0" stroke-width="1.300" stroke-linejoin="round"/></svg>
<span class="t" style="left:1021.0px;top:105.0px;width:200px;text-align:center;font-size:12px;line-height:14px;color:#444;">创</span>
<span class="t" style="left:1021.0px;top:119.5px;width:200px;text-align:center;font-size:12px;line-height:14px;color:#444;">意</span>
<span class="t" style="left:1020.0px;top:146.0px;width:200px;text-align:center;font-size:12px;line-height:14px;color:#555;">创意</span>
<div style="left:1149.0px;top:68.0px;width:1px;height:90.0px;background:#c8c6c4"></div>
<svg style="left:1167.0px;top:68.0px" width="30" height="33" viewBox="0 0 30 33" overflow="visible"><rect x="1.500" y="4.500" width="20" height="27" fill="#efefee" stroke="#c6c6c6"/><g transform="translate(-1.500 2) rotate(45 17 13)"><rect x="12.500" y="-5" width="9" height="7.500" fill="#f3f2f1" stroke="#bdbdbd"/><rect x="11" y="2.500" width="12" height="6" fill="#c9c9c9" stroke="#bdbdbd"/><rect x="13" y="8.500" width="8" height="17" fill="#f3f2f1" stroke="#bdbdbd"/><rect x="15.500" y="11" width="3" height="12" fill="none" stroke="#c4c4c4"/></g></svg>
<span class="t" style="left:1079.0px;top:105.0px;width:200px;text-align:center;font-size:12px;line-height:14px;color:#b0b0b0;">敏感</span>
<span class="t" style="left:1167.0px;top:119.5px;font-size:12px;line-height:14px;color:#b0b0b0;">性</span>
<svg style="left:1182.5px;top:123.3px" width="8" height="6" viewBox="0 0 8 6" fill="none" stroke="#b0b0b0" stroke-width="1.1"><path d="M1 1.200l3 3l3-3"/></svg>
<span class="t" style="left:1078.0px;top:146.0px;width:200px;text-align:center;font-size:12px;line-height:14px;color:#555;">敏感度</span>
<div style="left:1207.0px;top:68.0px;width:1px;height:90.0px;background:#c8c6c4"></div>
<svg style="left:1245.0px;top:71.0px" width="32" height="30" viewBox="0 0 32 30" ><rect x="0" y="0" width="15" height="29.500" fill="#3f4db8"/><rect x="15" y="3.500" width="15" height="23" fill="#fff" stroke="#3f4db8" stroke-width="1.400"/><path d="M2 10.500l5.500 4.500l-5.500 4.500z" fill="#fff"/><path d="M13 10.500l-5.500 4.500l5.500 4.500z" fill="#d5d9ee"/><path d="M5 10.500h5l-2.500 4.500z" fill="#3f4db8"/><rect x="17" y="12.500" width="4.500" height="4.500" rx="1.500" fill="#fff" stroke="#3f4db8" stroke-width="0.900"/><rect x="23.500" y="9.500" width="4.500" height="3.500" fill="#fff" stroke="#3f4db8" stroke-width="0.900"/><rect x="23.500" y="16.500" width="4.500" height="3.500" fill="#fff" stroke="#3f4db8" stroke-width="0.900"/><path d="M21.500 14.800h1M22.500 11.300v7M22.500 11.300h1M22.500 18.300h1" stroke="#3f4db8" stroke-width="0.900" fill="none"/></svg>
<span class="t" style="left:1242.5px;top:105.0px;font-size:12px;line-height:14px;color:#444;">发送到</span>
<span class="t" style="left:1219.0px;top:119.5px;font-size:12.5px;line-height:14.5px;color:#444;letter-spacing:0.700px">MindManager</span>
<span class="t" style="left:1219.0px;top:146.0px;font-size:12.5px;line-height:14.5px;color:#555;letter-spacing:0.700px">MindManager</span>

<div id="namebox" style="left:5px;top:173px;width:102px;height:28px;background:#fff;border:1px solid #c6c6c6"></div>
<span class="t" style="left:12px;top:180px;font-size:13px;line-height:15px;color:#333">N7</span>
<svg style="left:92px;top:183px" width="9" height="6" viewBox="0 0 9 6"><path d="M0.500 0.500h8l-4 4.500z" fill="#777"/></svg>
<div style="left:121px;top:182px;width:2px;height:2px;background:#9a9a9a"></div>
<div style="left:121px;top:186px;width:2px;height:2px;background:#9a9a9a"></div>
<div style="left:121px;top:190px;width:2px;height:2px;background:#9a9a9a"></div>
<div id="fxbox" style="left:137px;top:173px;width:110px;height:28px;background:#fff;border:1px solid #c6c6c6"></div>
<svg style="left:150px;top:181px" width="13" height="12" viewBox="0 0 13 12" fill="none" stroke="#c0c0c0" stroke-width="1.4"><path d="M1 1l10.500 10M11.500 1l-10.500 10"/></svg>
<svg style="left:185px;top:181px" width="15" height="12" viewBox="0 0 15 12" fill="none" stroke="#c4c4c4" stroke-width="2.200"><path d="M1.500 6.500l4 4l8-9"/></svg>
<span class="t" style="left:222.500px;top:178px;font-size:14px;line-height:16px;color:#6a6a6a;font-family:'Liberation Serif',serif;font-style:italic;font-weight:bold">f<span style="position:static;font-size:9px;font-weight:bold">x</span></span>
<div id="finput" style="left:250px;top:173px;width:1031px;height:28px;background:#fff;border:1px solid #c6c6c6"></div>

<div id="sheet">
<div id="gridbg"></div>
<div class="ch" style="left:29px;width:38px">A</div>
<div class="ch" style="left:68px;width:61px">B</div>
<div class="ch" style="left:130px;width:101px">C</div>
<div class="ch" style="left:232px;width:101px">D</div>
<div class="ch" style="left:334px;width:46px">E</div>
<div class="ch" style="left:381px;width:159px">F</div>
<div class="ch" style="left:541px;width:71px">G</div>
<div class="ch" style="left:613px;width:71px">H</div>
<div class="ch" style="left:685px;width:71px">I</div>
<div class="ch" style="left:757px;width:71px">J</div>
<div class="ch" style="left:829px;width:71px">K</div>
<div class="ch" style="left:901px;width:71px">L</div>
<div class="ch" style="left:973px;width:71px">M</div>
<div class="chs" style="left:28px"></div>
<div class="chs" style="left:67px"></div>
<div class="chs" style="left:129px"></div>
<div class="chs" style="left:231px"></div>
<div class="chs" style="left:333px"></div>
<div class="chs" style="left:380px"></div>
<div class="chs" style="left:540px"></div>
<div class="chs" style="left:612px"></div>
<div class="chs" style="left:684px"></div>
<div class="chs" style="left:756px"></div>
<div class="chs" style="left:828px"></div>
<div class="chs" style="left:900px"></div>
<div class="chs" style="left:972px"></div>
<div class="chs" style="left:1044px"></div>
<div class="rh" style="top:230px;height:39px"><span>1</span></div>
<div class="rhs" style="top:269px"></div>
<div class="rh" style="top:270px;height:19px"><span>2</span></div>
<div class="rhs" style="top:289px"></div>
<div class="rh" style="top:290px;height:19px"><span>3</span></div>
<div class="rhs" style="top:309px"></div>
<div class="rh" style="top:310px;height:19px"><span>4</span></div>
<div class="rhs" style="top:329px"></div>
<div class="rh" style="top:330px;height:19px"><span>5</span></div>
<div class="rhs" style="top:349px"></div>
<div class="rh" style="top:350px;height:19px"><span>6</span></div>
<div class="rhs" style="top:369px"></div>
<div class="rh" style="top:370px;height:19px"><span>7</span></div>
<div class="rhs" style="top:389px"></div>
<div class="rh" style="top:390px;height:19px"><span>8</span></div>
<div class="rhs" style="top:409px"></div>
<div class="rh" style="top:410px;height:19px"><span>9</span></div>
<div class="rhs" style="top:429px"></div>
<div class="rh" style="top:430px;height:19px"><span>10</span></div>
<div class="rhs" style="top:449px"></div>
<div class="rh" style="top:450px;height:19px"><span>11</span></div>
<div class="rhs" style="top:469px"></div>
<div class="rh" style="top:470px;height:18px"><span>12</span></div>
<div class="rhs" style="top:488px"></div>
<div class="rh" style="top:489px;height:18px"><span>13</span></div>
<div class="rhs" style="top:507px"></div>
<div class="rh" style="top:508px;height:18px"><span>14</span></div>
<div class="rhs" style="top:526px"></div>
<div class="rh" style="top:527px;height:18px"><span>15</span></div>
<div class="rhs" style="top:545px"></div>
<div class="rh" style="top:546px;height:18px"><span>16</span></div>
<div class="rhs" style="top:564px"></div>
<div class="rh" style="top:565px;height:18px"><span>17</span></div>
<div class="rhs" style="top:583px"></div>
<div class="rh" style="top:584px;height:18px"><span>18</span></div>
<div class="rhs" style="top:602px"></div>
<div class="rh" style="top:603px;height:18px"><span>19</span></div>
<div class="rhs" style="top:621px"></div>
<div class="rh" style="top:622px;height:18px"><span>20</span></div>
<div class="rhs" style="top:640px"></div>
<div class="rh" style="top:641px;height:18px"><span>21</span></div>
<div class="rhs" style="top:659px"></div>
<div class="rh" style="top:660px;height:18px"><span>22</span></div>
<div class="rhs" style="top:678px"></div>
<div class="gv" style="left:67px"></div>
<div class="gv" style="left:129px"></div>
<div class="gv" style="left:231px"></div>
<div class="gv" style="left:333px"></div>
<div class="gv" style="left:380px"></div>
<div class="gv" style="left:540px"></div>
<div class="gv" style="left:612px"></div>
<div class="gv" style="left:684px"></div>
<div class="gv" style="left:756px"></div>
<div class="gv" style="left:828px"></div>
<div class="gv" style="left:900px"></div>
<div class="gv" style="left:972px"></div>
<div class="gv" style="left:1044px"></div>
<div class="gh" style="top:269px"></div>
<div class="gh" style="top:289px"></div>
<div class="gh" style="top:309px"></div>
<div class="gh" style="top:329px"></div>
<div class="gh" style="top:349px"></div>
<div class="gh" style="top:369px"></div>
<div class="gh" style="top:389px"></div>
<div class="gh" style="top:409px"></div>
<div class="gh" style="top:429px"></div>
<div class="gh" style="top:449px"></div>
<div class="gh" style="top:469px"></div>
<div class="gh" style="top:488px"></div>
<div class="gh" style="top:507px"></div>
<div class="gh" style="top:526px"></div>
<div class="gh" style="top:545px"></div>
<div class="gh" style="top:564px"></div>
<div class="gh" style="top:583px"></div>
<div class="gh" style="top:602px"></div>
<div class="gh" style="top:621px"></div>
<div class="gh" style="top:640px"></div>
<div class="gh" style="top:659px"></div>
<div class="gh" style="top:678px"></div>
<div class="tc hd c0" style="left:28px;top:229px;width:40px;height:41px"><span><b>NO</b></span></div>
<div class="tc hd" style="left:67px;top:229px;width:63px;height:41px"><span>任务</span></div>
<div class="tc hd" style="left:129px;top:229px;width:103px;height:41px"><span>开始日期</span></div>
<div class="tc hd" style="left:231px;top:229px;width:103px;height:41px"><span>结束日期</span></div>
<div class="tc hd" style="left:333px;top:229px;width:48px;height:41px"><span>天数</span></div>
<div class="tc hd c5" style="left:380px;top:229px;width:160px;height:41px"><span><i>距任务还有（天)</i></span></div>
<div class="tc c0" style="left:28px;top:269px;width:40px;height:21px"><span><b>1</b></span></div>
<div class="tc" style="left:67px;top:269px;width:63px;height:21px"><span>任务<b>1</b></span></div>
<div class="tc" style="left:129px;top:269px;width:103px;height:21px"><span><b>2019/11/1</b></span></div>
<div class="tc" style="left:231px;top:269px;width:103px;height:21px"><span><b>2019/11/5</b></span></div>
<div class="tc" style="left:333px;top:269px;width:48px;height:21px"><span><b>5</b>天</span></div>
<div class="tc c5" style="left:380px;top:269px;width:160px;height:21px"><span><b>0</b></span></div>
<div class="tc c0" style="left:28px;top:289px;width:40px;height:21px"><span><b>2</b></span></div>
<div class="tc" style="left:67px;top:289px;width:63px;height:21px"><span>任务<b>2</b></span></div>
<div class="tc" style="left:129px;top:289px;width:103px;height:21px"><span><b>2019/11/6</b></span></div>
<div class="tc" style="left:231px;top:289px;width:103px;height:21px"><span><b>2019/11/18</b></span></div>
<div class="tc" style="left:333px;top:289px;width:48px;height:21px"><span><b>13</b>天</span></div>
<div class="tc c5" style="left:380px;top:289px;width:160px;height:21px"><span><b>0</b></span></div>
<div class="tc c0" style="left:28px;top:309px;width:40px;height:21px"><span><b>3</b></span></div>
<div class="tc" style="left:67px;top:309px;width:63px;height:21px"><span>任务<b>3</b></span></div>
<div class="tc" style="left:129px;top:309px;width:103px;height:21px"><span><b>2019/11/19</b></span></div>
<div class="tc" style="left:231px;top:309px;width:103px;height:21px"><span><b>2019/11/23</b></span></div>
<div class="tc" style="left:333px;top:309px;width:48px;height:21px"><span><b>5</b>天</span></div>
<div class="tc c5" style="left:380px;top:309px;width:160px;height:21px"><span><b>0</b></span></div>
<div class="tc c0" style="left:28px;top:329px;width:40px;height:21px"><span><b>4</b></span></div>
<div class="tc" style="left:67px;top:329px;width:63px;height:21px"><span>任务<b>4</b></span></div>
<div class="tc" style="left:129px;top:329px;width:103px;height:21px"><span><b>2019/11/24</b></span></div>
<div class="tc" style="left:231px;top:329px;width:103px;height:21px"><span><b>2019/11/27</b></span></div>
<div class="tc" style="left:333px;top:329px;width:48px;height:21px"><span><b>4</b>天</span></div>
<div class="tc c5" style="left:380px;top:329px;width:160px;height:21px"><span><b>0</b></span></div>
<div class="tc c0" style="left:28px;top:349px;width:40px;height:21px"><span><b>5</b></span></div>
<div class="tc" style="left:67px;top:349px;width:63px;height:21px"><span>任务<b>5</b></span></div>
<div class="tc" style="left:129px;top:349px;width:103px;height:21px"><span><b>2019/11/28</b></span></div>
<div class="tc" style="left:231px;top:349px;width:103px;height:21px"><span><b>2019/11/30</b></span></div>
<div class="tc" style="left:333px;top:349px;width:48px;height:21px"><span><b>3</b>天</span></div>
<div class="tc c5" style="left:380px;top:349px;width:160px;height:21px"><span><b>0</b></span></div>
<div class="tc c0" style="left:28px;top:369px;width:40px;height:21px"><span><b>6</b></span></div>
<div class="tc" style="left:67px;top:369px;width:63px;height:21px"><span>任务<b>6</b></span></div>
<div class="tc" style="left:129px;top:369px;width:103px;height:21px"><span><b>2019/12/1</b></span></div>
<div class="tc" style="left:231px;top:369px;width:103px;height:21px"><span><b>2019/12/3</b></span></div>
<div class="tc" style="left:333px;top:369px;width:48px;height:21px"><span><b>3</b>天</span></div>
<div class="tc c5" style="left:380px;top:369px;width:160px;height:21px"><span><b>0</b></span></div>
<div class="tc c0" style="left:28px;top:389px;width:40px;height:21px"><span><b>7</b></span></div>
<div class="tc" style="left:67px;top:389px;width:63px;height:21px"><span>任务<b>7</b></span></div>
<div class="tc" style="left:129px;top:389px;width:103px;height:21px"><span><b>2019/12/4</b></span></div>
<div class="tc" style="left:231px;top:389px;width:103px;height:21px"><span><b>2019/12/8</b></span></div>
<div class="tc" style="left:333px;top:389px;width:48px;height:21px"><span><b>5</b>天</span></div>
<div class="tc c5" style="left:380px;top:389px;width:160px;height:21px"><span><b>0</b></span></div>
<div class="tc c0" style="left:28px;top:409px;width:40px;height:21px"><span><b>8</b></span></div>
<div class="tc" style="left:67px;top:409px;width:63px;height:21px"><span>任务<b>8</b></span></div>
<div class="tc" style="left:129px;top:409px;width:103px;height:21px"><span><b>2019/12/8</b></span></div>
<div class="tc" style="left:231px;top:409px;width:103px;height:21px"><span><b>2019/12/15</b></span></div>
<div class="tc" style="left:333px;top:409px;width:48px;height:21px"><span><b>8</b>天</span></div>
<div class="tc c5" style="left:380px;top:409px;width:160px;height:21px"><span>距完成任务还有<b>5</b>天</span></div>
<div class="tc c0" style="left:28px;top:429px;width:40px;height:21px"><span><b>9</b></span></div>
<div class="tc" style="left:67px;top:429px;width:63px;height:21px"><span>任务<b>9</b></span></div>
<div class="tc" style="left:129px;top:429px;width:103px;height:21px"><span><b>2019/12/16</b></span></div>
<div class="tc" style="left:231px;top:429px;width:103px;height:21px"><span><b>2019/12/23</b></span></div>
<div class="tc" style="left:333px;top:429px;width:48px;height:21px"><span><b>8</b>天</span></div>
<div class="tc c5" style="left:380px;top:429px;width:160px;height:21px"><span>距完成任务还有<b>13</b>天</span></div>
<div class="tc c0" style="left:28px;top:449px;width:40px;height:21px"><span><b>10</b></span></div>
<div class="tc" style="left:67px;top:449px;width:63px;height:21px"><span>任务<b>10</b></span></div>
<div class="tc" style="left:129px;top:449px;width:103px;height:21px"><span><b>2019/12/24</b></span></div>
<div class="tc" style="left:231px;top:449px;width:103px;height:21px"><span><b>2019/12/30</b></span></div>
<div class="tc" style="left:333px;top:449px;width:48px;height:21px"><span><b>7</b>天</span></div>
<div class="tc c5" style="left:380px;top:449px;width:160px;height:21px"><span>距完成任务还有<b>20</b>天</span></div>
<div id="rhline"></div><div id="chline"></div>
<svg class="chart" width="482" height="290" viewBox="555 283 482 290" style="left:555px;top:283px">
<rect x="555.5" y="283.5" width="480" height="288" fill="#fff" stroke="#d9d9d9"/>
<line x1="611.6" y1="297" x2="611.6" y2="540" stroke="#d9d9d9" stroke-width="1"/>
<line x1="666.3" y1="297" x2="666.3" y2="540" stroke="#d9d9d9" stroke-width="1"/>
<line x1="721.0" y1="297" x2="721.0" y2="540" stroke="#d9d9d9" stroke-width="1"/>
<line x1="775.7" y1="297" x2="775.7" y2="540" stroke="#d9d9d9" stroke-width="1"/>
<line x1="830.4" y1="297" x2="830.4" y2="540" stroke="#d9d9d9" stroke-width="1"/>
<line x1="885.1" y1="297" x2="885.1" y2="540" stroke="#d9d9d9" stroke-width="1"/>
<line x1="939.8" y1="297" x2="939.8" y2="540" stroke="#d9d9d9" stroke-width="1"/>
<line x1="994.5" y1="297" x2="994.5" y2="540" stroke="#d9d9d9" stroke-width="1"/>
<rect x="611.6" y="523.0" width="136.8" height="9.6" fill="#4472c4"/>
<rect x="748.4" y="523.0" width="13.7" height="9.6" fill="#ed7d31"/>
<text class="cl" x="600.3" y="532.1" text-anchor="end">任务1</text>
<rect x="611.6" y="498.8" width="150.4" height="9.6" fill="#4472c4"/>
<rect x="762.0" y="498.8" width="35.6" height="9.6" fill="#ed7d31"/>
<text class="cl" x="600.3" y="507.9" text-anchor="end">任务2</text>
<rect x="611.6" y="474.6" width="186.0" height="9.6" fill="#4472c4"/>
<rect x="797.6" y="474.6" width="13.7" height="9.6" fill="#ed7d31"/>
<text class="cl" x="600.3" y="483.7" text-anchor="end">任务3</text>
<rect x="611.6" y="450.4" width="199.7" height="9.6" fill="#4472c4"/>
<rect x="811.3" y="450.4" width="10.9" height="9.6" fill="#ed7d31"/>
<text class="cl" x="600.3" y="459.5" text-anchor="end">任务4</text>
<rect x="611.6" y="426.2" width="210.6" height="9.6" fill="#4472c4"/>
<rect x="822.2" y="426.2" width="8.2" height="9.6" fill="#ed7d31"/>
<text class="cl" x="600.3" y="435.3" text-anchor="end">任务5</text>
<rect x="611.6" y="402.0" width="218.8" height="9.6" fill="#4472c4"/>
<rect x="830.4" y="402.0" width="8.2" height="9.6" fill="#ed7d31"/>
<text class="cl" x="600.3" y="411.1" text-anchor="end">任务6</text>
<rect x="611.6" y="377.8" width="227.0" height="9.6" fill="#4472c4"/>
<rect x="838.6" y="377.8" width="13.7" height="9.6" fill="#ed7d31"/>
<text class="cl" x="600.3" y="386.9" text-anchor="end">任务7</text>
<rect x="611.6" y="353.6" width="237.9" height="9.6" fill="#4472c4"/>
<rect x="849.5" y="353.6" width="21.9" height="9.6" fill="#ed7d31"/>
<rect x="871.4" y="353.6" width="13.7" height="9.6" fill="#a5a5a5"/>
<text class="cl" x="600.3" y="362.7" text-anchor="end">任务8</text>
<rect x="611.6" y="329.4" width="259.8" height="9.6" fill="#4472c4"/>
<rect x="871.4" y="329.4" width="21.9" height="9.6" fill="#ed7d31"/>
<rect x="893.3" y="329.4" width="35.6" height="9.6" fill="#a5a5a5"/>
<text class="cl" x="600.3" y="338.5" text-anchor="end">任务9</text>
<rect x="611.6" y="305.2" width="281.7" height="9.6" fill="#4472c4"/>
<rect x="893.3" y="305.2" width="19.1" height="9.6" fill="#ed7d31"/>
<rect x="912.5" y="305.2" width="54.7" height="9.6" fill="#a5a5a5"/>
<text class="cl" x="600.3" y="314.3" text-anchor="end">任务10</text>
<text class="cl" x="611.6" y="560" text-anchor="middle">2019/9/12</text>
<text class="cl" x="666.3" y="560" text-anchor="middle">2019/10/2</text>
<text class="cl" x="721.0" y="560" text-anchor="middle">2019/10/22</text>
<text class="cl" x="775.7" y="560" text-anchor="middle">2019/11/11</text>
<text class="cl" x="830.4" y="560" text-anchor="middle">2019/12/1</text>
<text class="cl" x="885.1" y="560" text-anchor="middle">2019/12/21</text>
<text class="cl" x="939.8" y="560" text-anchor="middle">2020/1/10</text>
<text class="cl" x="994.5" y="560" text-anchor="middle">2020/1/30</text>
</svg>
<div style="left:1059px;top:229px;width:1px;height:450px;background:#b3b3b3"></div>
<svg style="left:14px;top:215px" width="12" height="12" viewBox="0 0 12 12"><path d="M11 1v10h-10z" fill="#b8b8b8"/></svg>
<!-- vertical scrollbar -->
<div style="left:1063px;top:228px;width:15px;height:413px;background:#fff;border:1px solid #c6c6c6;border-top:0"></div>
<div style="left:1063px;top:641px;width:15px;height:24px;background:#dadada"></div>
<div style="left:1063px;top:213px;width:15px;height:15px;background:#fff;border:1px solid #c6c6c6"></div>
<svg style="left:1066px;top:217px" width="9" height="6" viewBox="0 0 9 6"><path d="M0.500 5.500h8l-4-4.500z" fill="#666"/></svg>
<div style="left:1063px;top:664px;width:15px;height:15px;background:#fff;border:1px solid #c6c6c6"></div>
<svg style="left:1066px;top:670px" width="9" height="6" viewBox="0 0 9 6"><path d="M0.500 0.500h8l-4 4.500z" fill="#666"/></svg>

</div>
<div style="left:1081px;top:202px;width:199px;height:504px;background:#e6e6e6"></div>
<div style="left:1081px;top:213px;width:1px;height:491px;background:#c0c0c0"></div>
<span class="t" style="left:1095.500px;top:225px;font-size:21px;line-height:26px;color:#217346;font-weight:300">设置形状格式</span>
<div style="left:1097px;top:260px;width:30px;height:30px;background:#ababab"></div>
<svg style="left:1099px;top:261px" width="27" height="28" viewBox="0 0 27 28"><path d="M11.500 5l9.500 9.500l-9.500 9.500l-9.500-9.500z" fill="#fff" stroke="#217346" stroke-width="1.600" stroke-linejoin="round"/><path d="M12.500 11v-7c0-2.600-3.800-2.600-3.800 0v4" fill="none" stroke="#217346" stroke-width="1.400"/><circle cx="12.500" cy="11" r="1.500" fill="#217346"/><path d="M18.500 9c4.500 0.500 7 3.500 6.500 8c-0.300 2.500-1.500 4-3 5.500c0.500-3.500 0-6.500-1.500-8.500z" fill="#217346"/></svg>
<svg style="left:1141px;top:262px" width="24" height="26" viewBox="0 0 24 26"><path d="M11.500 1.500l9.800 7.300l-3.600 11.200h-12.400l-3.600-11.200z" fill="#fff" stroke="#666" stroke-width="1.100" stroke-linejoin="round"/><path d="M5.300 20.200h12.400" stroke="#555" stroke-width="2"/><path d="M5.300 21l-1.300 3.500M17.700 21l1.300 3.500" fill="none" stroke="#bbb" stroke-width="1.100"/></svg>
<svg style="left:1180px;top:263px" width="24" height="24" viewBox="0 0 24 24"><path d="M7.500 1.500v4M21.500 1.500v4M7.500 3.500h14" stroke="#666" fill="none"/><path d="M3 7.500v14M1 7.500h4M1 21.500h4" stroke="#666" fill="none"/><rect x="7.500" y="7.200" width="14.500" height="14.500" fill="#6e6e6e"/><path d="M14.700 9.500v10M9.700 14.500h10" stroke="#fff" stroke-width="1.100"/><path d="M14.700 8.500l-2 2.500h4zM14.700 20.500l-2-2.500h4zM8.700 14.500l2.500-2v4zM20.700 14.500l-2.500-2v4z" fill="#fff"/></svg>
<div style="left:1095px;top:304px;width:185px;height:1px;background:#c8c8c8"></div>
<svg style="left:1106px;top:296px" width="13" height="10" viewBox="0 0 13 10"><path d="M0 8.500l6-7l6 7" fill="#e6e6e6" stroke="#c8c8c8"/></svg>
<svg style="left:1102px;top:315px" width="8" height="8" viewBox="0 0 8 8"><path d="M7 0.500v6.500h-6.500z" fill="#444"/></svg>
<span class="t" style="left:1117px;top:311.500px;font-size:12px;line-height:14px;color:#217346;font-weight:bold">填充</span>
<svg style="left:1102px;top:481px" width="8" height="8" viewBox="0 0 8 8"><path d="M7 0.500v6.500h-6.500z" fill="#444"/></svg>
<span class="t" style="left:1117px;top:477.500px;font-size:12px;line-height:14px;color:#217346;font-weight:bold">线条</span>
<div class="rad" style="left:1118.5px;top:344.5px"></div>
<span class="t ro" style="left:1134.500px;top:342.5px">无填充(<u>N</u>)</span>
<div class="rad" style="left:1118.5px;top:369.5px"></div>
<span class="t ro" style="left:1134.500px;top:367.5px">纯色填充(<u>S</u>)</span>
<div class="rad" style="left:1118.5px;top:394.5px"></div>
<span class="t ro" style="left:1134.500px;top:392.5px">渐变填充(<u>G</u>)</span>
<div class="rad" style="left:1118.5px;top:419.5px"></div>
<span class="t ro" style="left:1134.500px;top:417.5px">图片或纹理填充(<u>P</u>)</span>
<div class="rad" style="left:1118.5px;top:444.5px"></div>
<span class="t ro" style="left:1134.500px;top:442.5px">图案填充(<u>A</u>)</span>
<div class="rad" style="left:1118.5px;top:510.5px"></div>
<span class="t ro" style="left:1134.500px;top:508.5px">无线条(<u>N</u>)</span>
<div class="rad" style="left:1118.5px;top:535.5px"></div>
<span class="t ro" style="left:1134.500px;top:533.5px">实线(<u>S</u>)</span>
<div class="rad" style="left:1118.5px;top:560.5px"></div>
<span class="t ro" style="left:1134.500px;top:558.5px">渐变线(<u>G</u>)</span>
<div style="left:0;top:679px;width:1081px;height:27px;background:#e6e6e6"></div>
<div style="left:0;top:678px;width:1060px;height:1px;background:#b3b3b3"></div>
<svg style="left:26px;top:687px" width="6" height="9" viewBox="0 0 6 9"><path d="M5 0.500v8l-4.500-4z" fill="#c4c4c4"/></svg>
<svg style="left:55px;top:687px" width="6" height="9" viewBox="0 0 6 9"><path d="M1 0.500v8l4.500-4z" fill="#c4c4c4"/></svg>
<div style="left:100px;top:678px;width:69px;height:25px;background:#fff;border-bottom:2px solid #217346;border-right:1px solid #c6c6c6;border-left:1px solid #c6c6c6"></div>
<span class="t" style="left:113.500px;top:683px;font-size:13.500px;line-height:16px;color:#217346;letter-spacing:-0.350px">Sheet1</span>
<svg style="left:201px;top:683px" width="18" height="18" viewBox="0 0 18 18" fill="none" stroke="#777" stroke-width="1.100"><circle cx="8.700" cy="9" r="7.300"/><path d="M8.700 5v8M4.700 9h8" stroke-width="1.400" stroke="#666"/></svg>
<div style="left:648px;top:687px;width:2px;height:2px;background:#9a9a9a"></div>
<div style="left:648px;top:691px;width:2px;height:2px;background:#9a9a9a"></div>
<div style="left:648px;top:695px;width:2px;height:2px;background:#9a9a9a"></div>
<!-- horizontal scrollbar -->
<div style="left:666px;top:685px;width:14px;height:15px;background:#fff;border:1px solid #c6c6c6"></div>
<svg style="left:670px;top:688px" width="6" height="9" viewBox="0 0 6 9"><path d="M5 0.500v8l-4.500-4z" fill="#555"/></svg>
<div style="left:679px;top:685px;width:292px;height:15px;background:#fff;border:1px solid #c6c6c6"></div>
<div style="left:971px;top:685px;width:74px;height:15px;background:#dadada"></div>
<div style="left:1045px;top:685px;width:15px;height:15px;background:#fff;border:1px solid #c6c6c6"></div>
<svg style="left:1049px;top:688px" width="6" height="9" viewBox="0 0 6 9"><path d="M1 0.500v8l4.500-4z" fill="#555"/></svg>
<!-- status bar -->
<div style="left:0;top:706px;width:1280px;height:14px;background:#f3f2f1;border-top:1px solid #d4d2d0"></div>
<span class="t" style="left:8px;top:710px;font-size:12px;line-height:14px;color:#777">就绪</span>
<span class="t" style="left:47px;top:709px;font-size:12px;line-height:14px;color:#444">计算</span>
<svg style="left:91px;top:711.500px" width="15" height="12" viewBox="0 0 15 12" fill="none" stroke="#555" stroke-width="1.100"><rect x="0.500" y="0.500" width="14" height="12"/><path d="M0.500 3.500h14"/><circle cx="10" cy="8.500" r="3" fill="#555"/></svg>
<div style="left:1061px;top:706px;width:40px;height:14px;background:#cbc9c7"></div>
<svg style="left:1074px;top:710px" width="14" height="12" viewBox="0 0 14 12" fill="none" stroke="#333" stroke-width="1.100"><rect x="0.500" y="0.500" width="13" height="12"/><path d="M0.500 6h13M5 0.500v12M9.500 0.500v12"/></svg>
<svg style="left:1114.500px;top:710px" width="14" height="12" viewBox="0 0 14 12" fill="none" stroke="#444" stroke-width="1.100"><rect x="0.500" y="0.500" width="12.500" height="12"/><rect x="3" y="3" width="7.500" height="9"/><path d="M5 6h3.500M5 8.500h3.500"/></svg>
<svg style="left:1154px;top:710px" width="14" height="12" viewBox="0 0 14 12" fill="none" stroke="#444" stroke-width="1.100"><path d="M0.500 12v-11.500h13v11.500M5 0.500v7h5.500v-7"/></svg>
<div style="left:1187px;top:716px;width:8px;height:1px;background:#444"></div>
<div style="left:1200px;top:716px;width:80px;height:1px;background:#a0a0a0"></div>
<div style="left:1248px;top:711px;width:5px;height:9px;background:#6a6a6a"></div>
<svg style="left:1010px;top:329px" width="15" height="23" viewBox="0 0 15 23"><path d="M1.500 1.500L1.500 17.700L5.300 14.200L8 20.200L10.300 19.200L7.600 13L13.200 13Z" fill="#fff" stroke="#000" stroke-width="1.100" stroke-linejoin="miter"/></svg>
</div>
</body>
</html>
